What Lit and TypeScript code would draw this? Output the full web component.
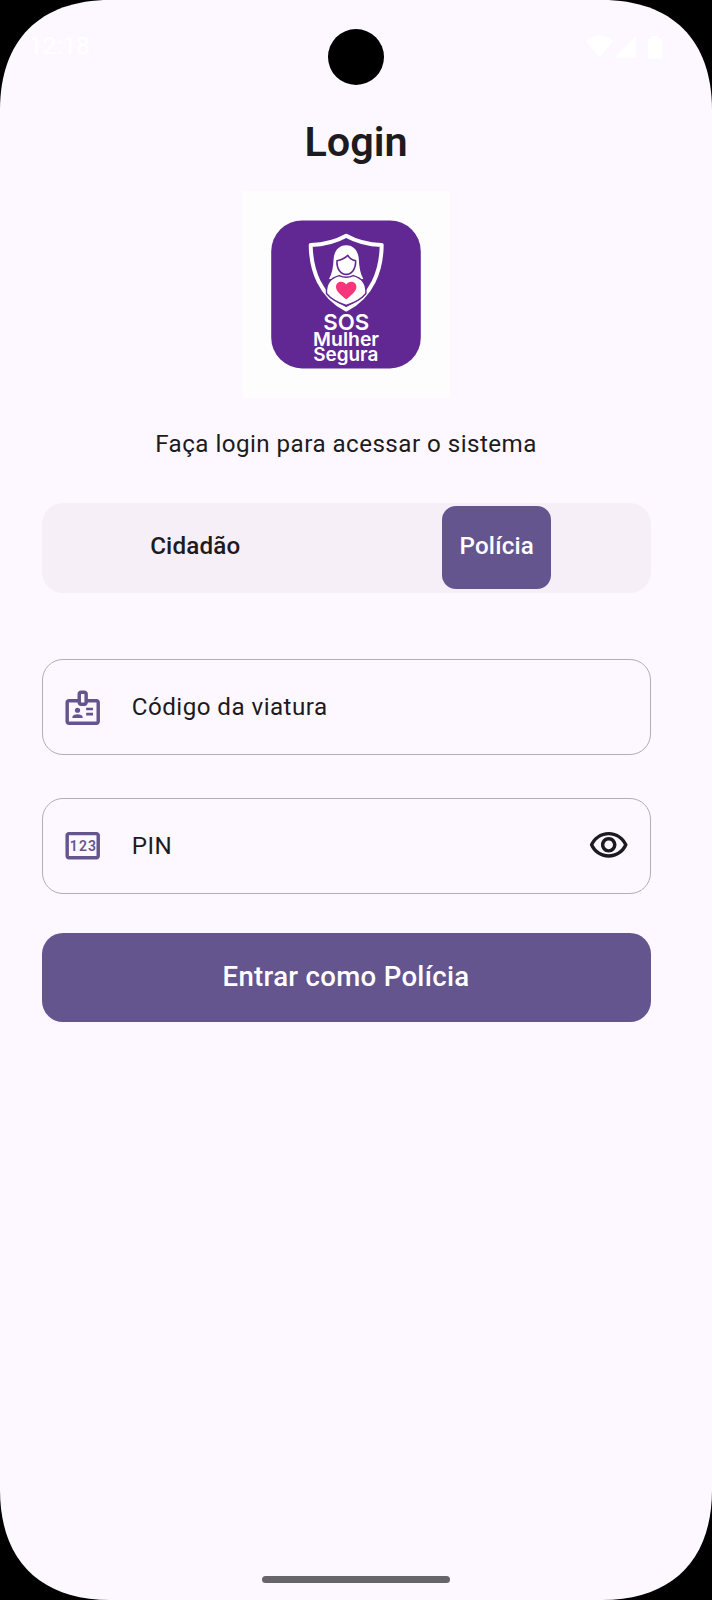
import { LitElement, html, css, svg } from "lit";
import { customElement, property, state } from "lit/decorators.js";

const badgeIcon = svg`
  <path fill-rule="evenodd" d="M20 7h-5V4c0-1.1-.9-2-2-2h-2c-1.1 0-2 .9-2 2v3H4c-1.1 0-2 .9-2 2v11c0 1.1.9 2 2 2h16c1.1 0 2-.9 2-2V9c0-1.1-.9-2-2-2zM11 4h2v5h-2V4zM20 20H4V9h5c0 1.1.9 2 2 2h2c1.1 0 2-.9 2-2h5v11z"/>
  <circle cx="9" cy="13.5" r="1.5"/>
  <path d="M11.08 16.18C10.44 15.9 9.74 15.75 9 15.75s-1.44.15-2.08.43c-.55.24-.92.78-.92 1.39V18h6v-.43c0-.61-.36-1.15-.92-1.39zM14 12h4v1.5h-4zM14 15h4v1.5h-4z"/>`;

const pinIcon = svg`
  <path fill-rule="evenodd" d="M20 4H4c-1.11 0-2 .9-2 2v12c0 1.1.89 2 2 2h16c1.1 0 2-.9 2-2V6c0-1.1-.9-2-2-2zM20 18H4V6h16v12z"/>
  <text x="4.45" y="14.95" font-family="Roboto, sans-serif" font-size="8.1" font-weight="600" letter-spacing="0.72">123</text>`;

const eyeIcon = svg`
  <path d="M12 6c3.79 0 7.17 2.13 8.82 5.5C19.17 14.87 15.79 17 12 17s-7.17-2.13-8.82-5.5C4.83 8.13 8.21 6 12 6m0-2C7 4 2.73 7.11 1 11.5 2.73 15.89 7 19 12 19s9.27-3.11 11-7.5C21.27 7.11 17 4 12 4zm0 5c1.38 0 2.5 1.12 2.5 2.5S13.38 14 12 14s-2.5-1.12-2.5-2.5S10.62 9 12 9m0-2c-2.48 0-4.5 2.02-4.5 4.5S9.52 16 12 16s4.5-2.02 4.5-4.5S14.48 7 12 7z"/>`;

@customElement("text-field")
export class TextField extends LitElement {
  @property() label = "";
  @property() icon: "badge" | "pin" = "badge";
  @property({ type: Boolean }) secret = false;

  static styles = css`
    :host { display: block; }
    .field {
      box-sizing: border-box;
      height: 96px;
      display: flex;
      align-items: center;
      padding: 0.5px 20px 0 19.9px;
      border: 1.5px solid #b3aeb5;
      border-radius: 21px;
      color: #1d1b20;
    }
    svg { width: 41.4px; height: 41.4px; flex: none; fill: #65558f; }
    .label {
      flex: 1;
      margin-left: 28px;
      font-size: 24.2px;
      line-height: 34px;
      letter-spacing: 0.45px;
    }
    .eye { fill: #1d1b20; }
  `;

  render() {
    return html`<div class="field">
      <svg viewBox="0 0 24 24">${this.icon === "badge" ? badgeIcon : pinIcon}</svg>
      <span class="label">${this.label}</span>
      ${this.secret ? html`<svg class="eye" viewBox="0 0 24 24">${eyeIcon}</svg>` : ""}
    </div>`;
  }
}

@customElement("app-logo")
export class AppLogo extends LitElement {
  static styles = css`
    :host { display: block; }
    svg { display: block; width: 208px; height: 209px; }
    text { font-family: Inter, sans-serif; font-weight: 600; fill: #fff; text-anchor: middle; }
  `;

  render() {
    return html`<svg viewBox="0 0 208 209">
      <rect x="0.5" y="1" width="207" height="207" fill="#fdfdfd"/>
      <rect x="29.2" y="30.4" width="149.6" height="148" rx="31" fill="#612893"/>
      <path d="M104.2 45.7C94 51.5 82 54.5 68.7 55C69 80 78 106 104.2 119.5C130.4 106 139.4 80 139.7 55C126.4 54.5 114.4 51.5 104.2 45.7Z" fill="none" stroke="#fff" stroke-width="4" stroke-linejoin="round"/>
      <path d="M104.2 55.2C96 55.2 92 62 91.6 69C91.3 77 90 84 87 89L104.2 90L121.4 89C118.4 84 117.1 77 116.8 69C116.4 62 112.4 55.2 104.2 55.2Z" fill="#fff"/>
      <path d="M95 70.8C99.5 70 103.2 68 105.8 65.4C107.5 68.4 110.3 70 113.6 70.8C114 79 109.5 84.4 104.2 84.4C99 84.4 94.4 79 95 70.8Z" fill="#fff" stroke="#612893" stroke-width="1.6" stroke-linejoin="round"/>
      <path d="M97.2 85.6Q104.2 88.8 111.2 85.6C120 88 124.6 93.5 123.9 103.5C119.5 109 112.5 112.8 104.2 115.5C95.9 112.8 88.9 109 84.5 103.5C83.8 93.5 88.4 88 97.2 85.6Z" fill="#fff" stroke="#612893" stroke-width="1.4"/>
      <path d="M104.2 109.3C98.5 104.8 94 101 94 97C94 91.2 101.2 90 104.2 94.4C107.2 90 114.4 91.2 114.4 97C114.4 101 109.9 104.8 104.2 109.3Z" fill="#f5367b"/>
      <text x="104.3" y="140" font-size="21.8" textLength="46" lengthAdjust="spacingAndGlyphs" font-weight="600">SOS</text>
      <text x="104.1" y="156" font-size="18.8" textLength="66" lengthAdjust="spacingAndGlyphs">Mulher</text>
      <text x="103.8" y="171.4" font-size="18.8" textLength="65" lengthAdjust="spacingAndGlyphs">Segura</text>
    </svg>`;
  }
}

@customElement("app-root")
export class AppRoot extends LitElement {
  @state() private role: "Cidadão" | "Polícia" = "Polícia";

  static styles = css`
    :host {
      display: block;
      width: 712px;
      height: 1600px;
      background: #000;
      font-family: Roboto, sans-serif;
      color: #1d1b20;
    }
    .screen {
      box-sizing: border-box;
      height: 1600px;
      display: flex;
      flex-direction: column;
      align-items: center;
      background: #fdf8ff;
      clip-path: path("M0 110C0 40 40 0 110 0H602C672 0 712 40 712 110V1490C712 1560 672 1600 602 1600H110C40 1600 0 1560 0 1490Z");
    }
    .status {
      box-sizing: border-box;
      width: 100%;
      height: 113px;
      flex: none;
      display: grid;
      grid-template-columns: 1fr 56px 1fr;
      align-items: start;
      padding: 29px 48px 0 48px;
    }
    .time { margin-left: -19px; padding-top: 3px; font-size: 24.5px; line-height: 28px; color: #fff; }
    .camera { width: 56px; height: 56px; border-radius: 50%; background: #000; }
    .signals { justify-self: end; width: 78px; height: 24px; margin: 6px 0 0 0; fill: #fff; }
    h1 { margin: 0; font-size: 41.4px; line-height: 59px; font-weight: 600; letter-spacing: 0; }
    .content {
      width: 609px;
      align-self: flex-start;
      margin-left: 41.5px;
      display: flex;
      flex-direction: column;
      align-items: center;
    }
    app-logo { margin-top: 18px; }
    .hint { margin: 27px 0 0; font-size: 24.2px; line-height: 36px; letter-spacing: 0.45px; white-space: nowrap; }
    .segments {
      box-sizing: border-box;
      width: 100%;
      height: 90px;
      margin-top: 41px;
      padding: 3px;
      display: grid;
      grid-template-columns: 1fr 1fr;
      justify-items: center;
      border-radius: 21px;
      background: #f6eff7;
    }
    .segment {
      height: 83px;
      padding: 0 17.3px 3px;
      border: 0;
      border-radius: 14px;
      background: none;
      color: #1d1b20;
      font: 500 24.2px/80px Roboto, sans-serif;
      letter-spacing: 0.17px;
    }
    .selected { background: #65558f; color: #fff; }
    text-field { width: 100%; }
    .first { margin-top: 66px; }
    .second { margin-top: 42.5px; }
    .submit {
      width: 100%;
      height: 89.5px;
      margin-top: 39px;
      padding: 0 0 1px;
      border: 0;
      border-radius: 21px;
      background: #65558f;
      color: #fff;
      font: 500 27.6px/40px Roboto, sans-serif;
      letter-spacing: 0.3px;
    }
    .home { width: 188px; height: 7px; margin: auto 0 17px; border-radius: 4px; background: #676569; }
  `;

  private segment(name: "Cidadão" | "Polícia") {
    return html`<button
      class="segment ${this.role === name ? "selected" : ""}"
      @click=${() => (this.role = name)}
    >${name}</button>`;
  }

  render() {
    return html`<main class="screen">
      <div class="status">
        <span class="time">12:18</span>
        <span class="camera"></span>
        <svg class="signals" viewBox="0 0 78 24">
          <path d="M0 6Q13-5 27 6L13.5 22.5Z"/>
          <path d="M50 1V22.5H29Z"/>
          <path d="M62 4H65V1H72V4H76.5V23.5H62Z"/>
        </svg>
      </div>
      <h1>Login</h1>
      <section class="content">
        <app-logo></app-logo>
        <p class="hint">Faça login para acessar o sistema</p>
        <div class="segments">${this.segment("Cidadão")}${this.segment("Polícia")}</div>
        <text-field class="first" icon="badge" label="Código da viatura"></text-field>
        <text-field class="second" icon="pin" label="PIN" secret></text-field>
        <button class="submit">Entrar como ${this.role}</button>
      </section>
      <div class="home"></div>
    </main>`;
  }
}
